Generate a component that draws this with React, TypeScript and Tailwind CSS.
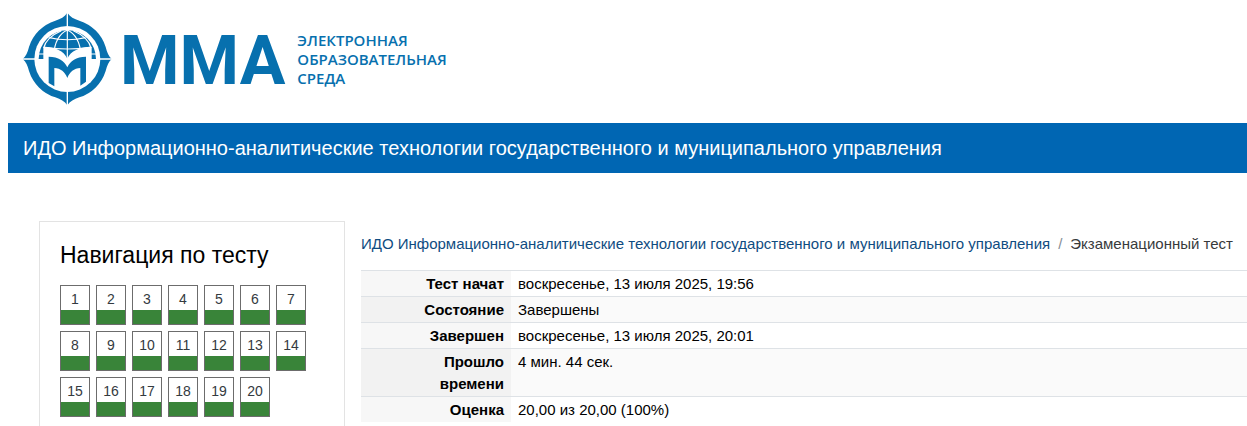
const questions = Array.from({ length: 20 }, (_, i) => i + 1);

interface SummaryRow {
  label: string;
  value: string;
}

const summary: SummaryRow[] = [
  { label: 'Тест начат', value: 'воскресенье, 13 июля 2025, 19:56' },
  { label: 'Состояние', value: 'Завершены' },
  { label: 'Завершен', value: 'воскресенье, 13 июля 2025, 20:01' },
  { label: 'Прошло времени', value: '4 мин. 44 сек.' },
  { label: 'Оценка', value: '20,00 из 20,00 (100%)' },
];

function Emblem() {
  return (
    <svg viewBox="36 22 270 282" className="h-[94px] w-[90px] shrink-0" aria-hidden="true">
      {/* compass ring */}
      <path
        fill="#0770ae"
        d="M172 24C164 36 152 43 136 48A121 121 0 0 0 57 127C53 143 48 155 38 163C48 171 53 183 57 199A121 121 0 0 0 136 278C152 283 164 290 172 302C180 290 192 283 208 278A121 121 0 0 0 287 199C291 183 296 171 305 163C296 155 291 143 287 127A121 121 0 0 0 208 48C192 43 180 36 172 24Z"
      />
      <circle cx="172" cy="163" r="99" fill="#fff" />
      <path stroke="#fff" strokeWidth="4" d="M172 22V66M172 260V304M36 163H76M268 163H308" />
      {/* upper half of the globe */}
      <path fill="#0770ae" d="M86 163A86 86 0 0 1 258 163Z" />
      <g fill="none" stroke="#fff" strokeWidth="3.5">
        <path d="M172 76V170" />
        <path d="M172 76C146 88 134 112 131 150M172 76C198 88 210 112 213 150" />
        <path d="M154 78C122 92 106 108 101 130M190 78C222 92 238 108 243 130" />
        <path d="M118 99C150 107 194 107 226 99M104 128C144 134 200 134 240 128M84 148H104M241 148H260" />
      </g>
      {/* open book shaped as a letter */}
      <path
        fill="#fff"
        d="M100 126C136 127 162 138 172 162C182 138 208 127 245 126V170H100Z"
      />
      <path
        fill="#0770ae"
        d="M116 156C146 157 163 168 172 188C181 168 198 157 228 156V231L211 243V190C192 191 179 202 172 220C165 202 152 191 133 190V245L116 235Z"
      />
    </svg>
  );
}

export default function App() {
  return (
    <div className="min-h-screen bg-white pl-2 font-['Liberation_Sans',Arial,sans-serif] text-[15px] leading-[22px] text-black">
      <header className="h-[123px] pl-[14px] pt-3">
        <a href="#" className="flex items-center text-[#0770ae]">
          <Emblem />
          <span className="ml-2 pt-1 font-['Roboto',sans-serif] text-[68px] font-bold leading-[90px]">ММА</span>
          <span className="ml-3 font-['Open_Sans',sans-serif] text-[15px] font-semibold leading-[19px]">
            ЭЛЕКТРОННАЯ
            <br />
            ОБРАЗОВАТЕЛЬНАЯ
            <br />
            СРЕДА
          </span>
        </a>
      </header>

      <div className="bg-[#0066b3] px-[15px] py-[11px]">
        <h1 className="text-xl leading-7 text-white">
          ИДО Информационно-аналитические технологии государственного и муниципального управления
        </h1>
      </div>

      <div className="flex gap-4 pl-[31px] pt-12">
        <aside className="w-[306px] shrink-0 border border-[#e3e3e3] p-5">
          <h2 className="mb-4 text-[23px] leading-[27px]">Навигация по тесту</h2>
          <nav className="flex flex-wrap gap-[6px]">
            {questions.map((n) => (
              <a
                key={n}
                href="#"
                className="flex h-10 w-[30px] flex-col border border-[#6c6c6c] text-center text-sm leading-[26px] text-[#343a40]"
              >
                <span className="h-6">{n}</span>
                <span className="grow bg-[#398439]" />
              </a>
            ))}
          </nav>
        </aside>

        <main className="min-w-0 grow pt-3">
          <ol className="mb-[15px] flex whitespace-nowrap">
            <li>
              <a href="#" className="text-[#0f4c81]">
                ИДО Информационно-аналитические технологии государственного и муниципального управления
              </a>
            </li>
            <li className="px-2 text-[#868e96]">/</li>
            <li className="text-[#373a3c]">Экзаменационный тест</li>
          </ol>
          <table className="w-full border-collapse">
            <tbody>
              {summary.map((row) => (
                <tr key={row.label} className="border-t border-[#dee2e6] align-top even:bg-[#fafafa]">
                  <th scope="row" className="w-[150px] bg-black/3 pl-12 pr-[7px] pt-[2px] pb-px text-right font-bold">
                    {row.label}
                  </th>
                  <td className="px-[7px] pt-[2px] pb-px">{row.value}</td>
                </tr>
              ))}
            </tbody>
          </table>
        </main>
      </div>
    </div>
  );
}
